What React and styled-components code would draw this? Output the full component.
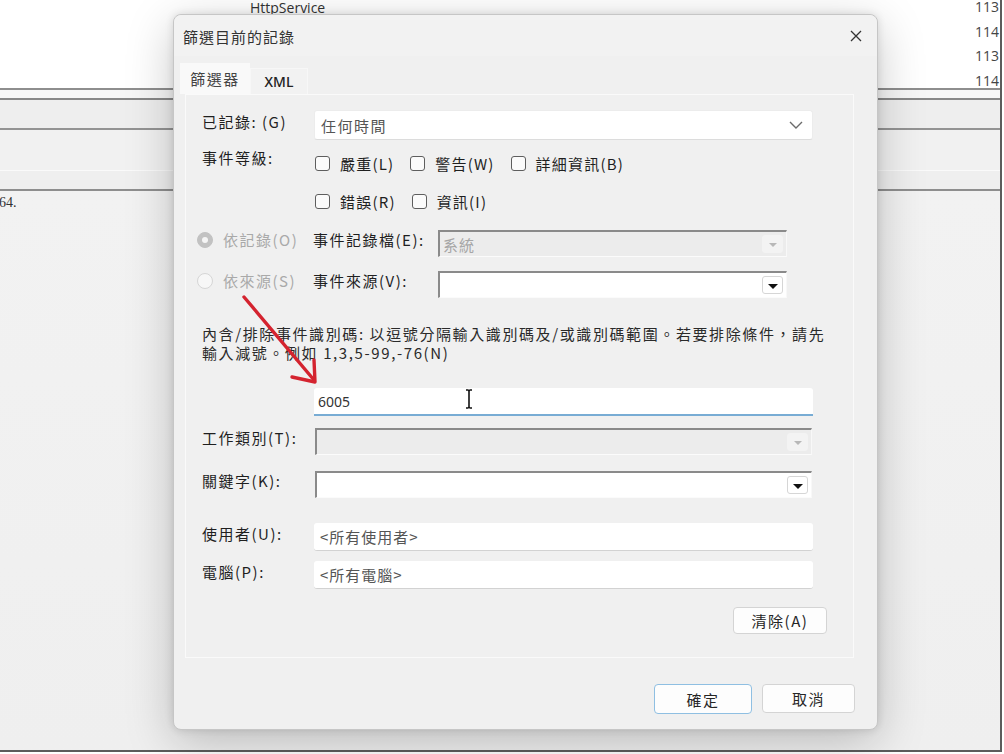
import React from 'react';
import styled, { createGlobalStyle } from 'styled-components';

const GlobalStyle = createGlobalStyle`
  html, body {
    margin: 0;
    padding: 0;
    background: #fff;
  }
  body {
    font-family: "Noto Sans CJK TC", "Noto Sans", sans-serif;
  }
`;

const cjk = `"Noto Sans CJK TC", "Noto Sans", sans-serif`;

const Screen = styled.div`
  position: relative;
  width: 1004px;
  height: 754px;
  overflow: hidden;
  background: #fff;
`;

/* ---------- the event viewer behind the dialog ---------- */

const Backdrop = styled.div`
  width: 1000px;
  height: 750px;
  border-right: 2px solid #5c5c5c;
  border-bottom: 2px solid #5c5c5c;
  display: flex;
  flex-direction: column;
  background: #f0f0f0;
`;

const TopArea = styled.div`
  height: 88px;
  background: #fff;
  display: grid;
  grid-template-columns: 250px 1fr 25px;
  overflow: hidden;
`;

const ServiceName = styled.div`
  font-family: "Open Sans", sans-serif;
  font-size: 14px;
  line-height: 15px;
  color: #333;
`;

const NumberColumn = styled.div`
  grid-column: 3;
  font-family: "Open Sans", sans-serif;
  font-size: 14px;
  line-height: 24.6px;
  color: #444;
  margin-top: -5px;
  white-space: nowrap;
  overflow: hidden;
`;

const Rule = styled.div`
  height: 2px;
  background: ${p => p.$c || '#8e8e8e'};
`;

const Band = styled.div`
  height: ${p => p.$h}px;
  background: ${p => p.$bg};
`;

const LogText = styled.div`
  flex: 1;
  font-family: "Liberation Serif", serif;
  font-size: 14px;
  color: #333;
  padding-top: 4px;
  margin-left: -1px;
  background: linear-gradient(180deg, #f2f2f2, #efefef);
`;

/* ---------- dialog ---------- */

const Dialog = styled.div`
  position: absolute;
  left: 173px;
  top: 14px;
  width: 705px;
  height: 716px;
  box-sizing: border-box;
  background: #f0f0f0;
  border: 1px solid #c6c6c6;
  border-radius: 8px;
  box-shadow: 0 12px 48px rgba(0, 0, 0, 0.22), 0 0 8px rgba(0, 0, 0, 0.12);
  display: flex;
  flex-direction: column;
  font-family: ${cjk};
  color: #222;
`;

const TitleBar = styled.div`
  height: 41px;
  display: flex;
  align-items: center;
  justify-content: space-between;
  padding: 0 15px 0 9px;
  background: #f2f2f2;
  border-radius: 8px 8px 0 0;
`;

const Title = styled.div`
  font-size: 15px;
  letter-spacing: 1px;
  color: #333;
  margin-top: 1px;
`;

const CloseBtn = styled.div`
  width: 12px;
  height: 12px;
  display: flex;
`;

const TabBar = styled.div`
  display: flex;
  align-items: flex-end;
  height: 31px;
  margin-top: 7px;
  padding-left: 6px;
`;

const Tab = styled.div`
  box-sizing: border-box;
  width: ${p => (p.$active ? 70 : 58)}px;
  height: ${p => (p.$active ? 31 : 26)}px;
  display: flex;
  align-items: center;
  justify-content: center;
  padding-bottom: ${p => (p.$active ? 2 : 0)}px;
  background: ${p => (p.$active ? '#f9f9f9' : '#f2f2f2')};
  border: 1px solid ${p => (p.$active ? '#f9f9f9' : '#f7f7f7')};
  border-bottom: none;
  font-family: ${p => (p.$active ? cjk : '"Noto Sans", sans-serif')};
  font-size: ${p => (p.$active ? 15 : 14)}px;
  font-weight: ${p => (p.$active ? 400 : 500)};
  letter-spacing: ${p => (p.$active ? 1.5 : 0)}px;
  color: ${p => (p.$active ? '#444' : '#222')};
`;

const Panel = styled.div`
  box-sizing: border-box;
  height: 564px;
  margin: 0 23px 0 11px;
  padding: 15px 26px 0 16px;
  border: 1px solid #fafafa;
  background: #f0f0f0;
  display: flex;
  flex-direction: column;
`;

const Row = styled.div`
  display: grid;
  grid-template-columns: 112px 499px;
  align-items: center;
  margin-top: ${p => p.$mt || 0}px;
  position: relative;
`;

const Label = styled.div`
  font-size: 15px;
  letter-spacing: 1.5px;
  line-height: 22px;
  color: ${p => (p.$dim ? '#a9a9a9' : '#1f1f1f')};
  white-space: nowrap;
  align-self: ${p => (p.$top ? 'start' : 'center')};
  margin-top: ${p => (p.$top ? -5 : -7)}px;
`;

const ModernSelect = styled.div`
  box-sizing: border-box;
  height: 30px;
  display: flex;
  align-items: center;
  justify-content: space-between;
  padding: 0 9px 0 6px;
  background: #fff;
  border: 1px solid #ececec;
  border-bottom-color: #dcdcdc;
  border-radius: 3px;
  font-size: 15px;
  letter-spacing: 1.5px;
  color: #555;
`;

const CheckGroup = styled.div`
  display: flex;
  flex-direction: column;
  gap: 16px;
`;

const CheckLine = styled.div`
  display: flex;
  align-items: center;
  gap: 15px;
  height: 22px;
`;

const CheckItem = styled.label`
  display: flex;
  align-items: center;
  gap: 10px;
  font-size: 15px;
  letter-spacing: 1.2px;
  color: #1f1f1f;
  white-space: nowrap;
`;

const Box = styled.span`
  box-sizing: border-box;
  width: 15px;
  height: 15px;
  border: 1px solid #5e5e5e;
  border-radius: 3px;
  background: #fbfbfb;
  margin-left: 1px;
`;

const SourceRow = styled.div`
  display: grid;
  grid-template-columns: 116px 125px 349px;
  align-items: center;
  margin-left: -5px;
  margin-top: ${p => p.$mt || 0}px;
`;

const RadioItem = styled.div`
  display: flex;
  align-items: center;
  gap: 10px;
  font-size: 15px;
  letter-spacing: 1.5px;
  color: #a9a9a9;
  white-space: nowrap;
  margin-top: -8px;
`;

const Radio = styled.span`
  box-sizing: border-box;
  width: 16px;
  height: 16px;
  border-radius: 50%;
  display: flex;
  align-items: center;
  justify-content: center;
  background: ${p => (p.$checked ? '#c2c2c2' : '#f7f7f7')};
  border: 1px solid ${p => (p.$checked ? '#c2c2c2' : '#d6d6d6')};
  &::after {
    content: '';
    display: ${p => (p.$checked ? 'block' : 'none')};
    width: 6px;
    height: 6px;
    border-radius: 50%;
    background: #f5f5f5;
  }
`;

const ClassicCombo = styled.div`
  box-sizing: border-box;
  height: 27px;
  display: flex;
  align-items: center;
  justify-content: space-between;
  padding-left: 3px;
  margin-left: ${p => p.$ml || 0}px;
  width: ${p => p.$w}px;
  border-top: 2px solid #8a8a8a;
  border-left: 2px solid #8a8a8a;
  border-right: 1px solid #f8f8f8;
  border-bottom: 1px solid #fbfbfb;
  background: ${p => (p.$disabled ? '#ececec' : '#fff')};
  font-size: 15px;
  letter-spacing: 1px;
  color: #a6a6a6;
`;

const ArrowBtn = styled.span`
  box-sizing: border-box;
  width: 21px;
  height: 18px;
  margin-right: 3px;
  display: flex;
  align-items: center;
  justify-content: center;
  background: ${p => (p.$disabled ? '#f3f3f3' : '#fff')};
  border: 1px solid ${p => (p.$disabled ? '#f3f3f3' : '#d6d6d6')};
  border-radius: 3px;
  &::after {
    content: '';
    border-left: ${p => (p.$disabled ? 4 : 5)}px solid transparent;
    border-right: ${p => (p.$disabled ? 4 : 5)}px solid transparent;
    border-top: ${p => (p.$disabled ? 4 : 5)}px solid ${p => (p.$disabled ? '#b8b8b8' : '#111')};
    margin-top: 2px;
  }
`;

const Description = styled.div`
  margin-top: 26px;
  font-size: 15px;
  letter-spacing: 1.6px;
  line-height: 19px;
  color: #2a2a2a;
  white-space: nowrap;
`;

const IdInput = styled.div`
  grid-column: 2;
  box-sizing: border-box;
  height: 28px;
  position: relative;
  display: flex;
  align-items: center;
  padding-left: 4px;
  background: #fff;
  border-radius: 3px 3px 0 0;
  border-bottom: 2px solid #78acd4;
  font-family: "Noto Sans", sans-serif;
  font-size: 14px;
  color: #333;
`;

const TextCursor = styled.svg`
  position: absolute;
  left: 150px;
  top: 0;
`;

const PlainInput = styled.div`
  box-sizing: border-box;
  height: 28px;
  display: flex;
  align-items: center;
  padding-left: 6px;
  background: #fff;
  border-radius: 3px;
  border-bottom: 1px solid #d2d2d2;
  font-size: 15px;
  letter-spacing: 1px;
  color: #555;
`;

const ClearRow = styled.div`
  display: flex;
  justify-content: flex-end;
  margin-top: 18px;
`;

const Button = styled.div`
  box-sizing: border-box;
  width: ${p => p.$w}px;
  height: ${p => p.$h || 29}px;
  display: flex;
  align-items: center;
  justify-content: center;
  background: #fdfdfd;
  border: 1px solid ${p => (p.$focus ? '#8fbfe2' : '#d4d4d4')};
  border-radius: 4px;
  font-size: 15px;
  letter-spacing: 1.5px;
  color: #262626;
`;

const Footer = styled.div`
  display: flex;
  justify-content: flex-end;
  gap: 10px;
  margin-top: 26px;
  padding-right: 22px;
`;

const RedArrow = styled.svg`
  position: absolute;
  left: 236px;
  top: 290px;
  pointer-events: none;
`;

const Chevron = () => (
  <svg width="14" height="8" viewBox="0 0 14 8">
    <polyline points="1,1 7,7 13,1" fill="none" stroke="#6b6b6b" strokeWidth="1.4" />
  </svg>
);

export default function App() {
  return (
    <Screen>
      <GlobalStyle />
      <Backdrop>
        <TopArea>
          <div />
          <ServiceName>HttpService</ServiceName>
          <NumberColumn>
            113<br />114<br />113<br />114
          </NumberColumn>
        </TopArea>
        <Rule />
        <Band $h={8} $bg="#f6f6f6" />
        <Rule $c="#878787" />
        <Band $h={28} $bg="#eeeeee" />
        <Rule $c="#939393" />
        <Band $h={40} $bg="#f1f1f1" />
        <Band $h={1} $bg="#fafafa" />
        <Band $h={18} $bg="#efefef" />
        <Rule $c="#8e8e8e" />
        <LogText>64.</LogText>
      </Backdrop>

      <Dialog>
        <TitleBar>
          <Title>篩選目前的記錄</Title>
          <CloseBtn>
            <svg width="12" height="12" viewBox="0 0 12 12">
              <path d="M1 1 L11 11 M11 1 L1 11" stroke="#333" strokeWidth="1.3" />
            </svg>
          </CloseBtn>
        </TitleBar>

        <TabBar>
          <Tab $active>篩選器</Tab>
          <Tab>XML</Tab>
        </TabBar>

        <Panel>
          <Row>
            <Label>已記錄: (G)</Label>
            <ModernSelect>
              <span>任何時間</span>
              <Chevron />
            </ModernSelect>
          </Row>

          <Row $mt={12}>
            <Label $top>事件等級:</Label>
            <CheckGroup>
              <CheckLine>
                <CheckItem><Box />嚴重(L)</CheckItem>
                <CheckItem><Box />警告(W)</CheckItem>
                <CheckItem><Box />詳細資訊(B)</CheckItem>
              </CheckLine>
              <CheckLine>
                <CheckItem><Box />錯誤(R)</CheckItem>
                <CheckItem><Box />資訊(I)</CheckItem>
              </CheckLine>
            </CheckGroup>
          </Row>

          <SourceRow $mt={18}>
            <RadioItem><Radio $checked />依記錄(O)</RadioItem>
            <Label>事件記錄檔(E):</Label>
            <ClassicCombo $disabled $w={349}>
              <span>系統</span>
              <ArrowBtn $disabled />
            </ClassicCombo>
          </SourceRow>

          <SourceRow $mt={14}>
            <RadioItem><Radio />依來源(S)</RadioItem>
            <Label>事件來源(V):</Label>
            <ClassicCombo $w={349}>
              <span />
              <ArrowBtn />
            </ClassicCombo>
          </SourceRow>

          <Description>
            內含/排除事件識別碼: 以逗號分隔輸入識別碼及/或識別碼範圍。若要排除條件，請先
            <br />
            輸入減號。例如 1,3,5-99,-76(N)
          </Description>

          <Row $mt={26}>
            <IdInput>
              6005
              <TextCursor width="10" height="22" viewBox="0 0 10 22">
                <path d="M2 2 H4 Q5 2 5 4 V18 Q5 20 4 20 H2 M8 2 H6 Q5 2 5 4 M5 18 Q5 20 6 20 H8" fill="none" stroke="#fff" strokeWidth="3.2" />
                <path d="M2 2 H4 Q5 2 5 4 V18 Q5 20 4 20 H2 M8 2 H6 Q5 2 5 4 M5 18 Q5 20 6 20 H8" fill="none" stroke="#111" strokeWidth="1.6" />
              </TextCursor>
            </IdInput>
          </Row>

          <Row $mt={12}>
            <Label>工作類別(T):</Label>
            <ClassicCombo $disabled $w={497} $ml={1}>
              <span />
              <ArrowBtn $disabled />
            </ClassicCombo>
          </Row>

          <Row $mt={16}>
            <Label>關鍵字(K):</Label>
            <ClassicCombo $w={497} $ml={1}>
              <span />
              <ArrowBtn />
            </ClassicCombo>
          </Row>

          <Row $mt={25}>
            <Label>使用者(U):</Label>
            <PlainInput>&lt;所有使用者&gt;</PlainInput>
          </Row>

          <Row $mt={10}>
            <Label>電腦(P):</Label>
            <PlainInput>&lt;所有電腦&gt;</PlainInput>
          </Row>

          <ClearRow>
            <Button $w={94} $h={27}>清除(A)</Button>
          </ClearRow>
        </Panel>

        <Footer>
          <Button $w={98} $h={30} $focus>確定</Button>
          <Button $w={93}>取消</Button>
        </Footer>
      </Dialog>

      <RedArrow width="90" height="100" viewBox="0 0 90 100">
        <g fill="none" stroke="#d4232f" strokeWidth="3.4" strokeLinecap="round" strokeLinejoin="round">
          <path d="M8 7 L78 90" />
          <path d="M56 87 L79 92 L78 70" />
        </g>
      </RedArrow>
    </Screen>
  );
}
